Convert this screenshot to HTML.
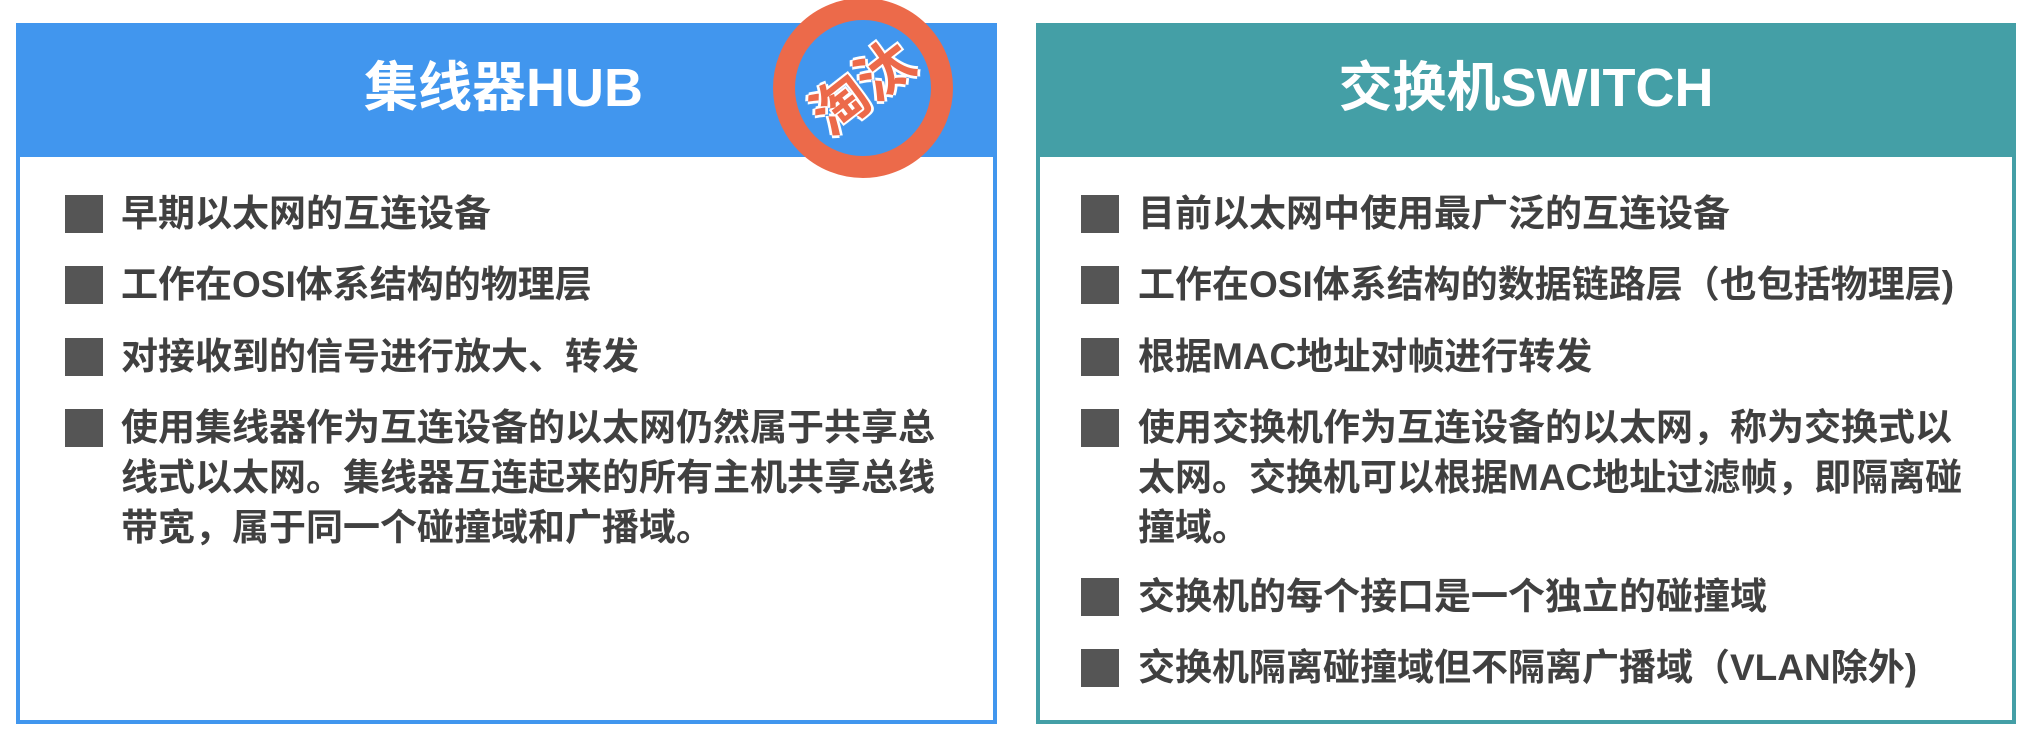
<!DOCTYPE html>
<html><head><meta charset="utf-8"><style>
*{margin:0;padding:0;box-sizing:border-box}
body{width:2038px;height:748px;background:#fff;position:relative;overflow:hidden;font-family:"Liberation Sans","Noto Sans CJK SC",sans-serif;font-weight:bold}
.panel{position:absolute;top:23px;height:701px;border:4px solid #4196ee;background:#fff}
.hdr{position:absolute;left:-4px;right:-4px;top:-4px;height:134px;color:#fff;font-size:54px;text-align:center;line-height:130px}
.item{position:absolute;color:#404040;font-size:37px;line-height:50px;white-space:nowrap}
.sq{position:absolute;width:38px;height:38px;background:#555}
</style></head><body>
<div class="panel" style="left:16px;width:981px;border-color:#4196ee">
  <div class="hdr" style="background:#4196ee;padding-right:6px">集线器HUB</div>
</div>
<div class="panel" style="left:1036px;width:980px;border-color:#449fa6">
  <div class="hdr" style="background:#449fa6">交换机SWITCH</div>
</div>
<div style="position:absolute;left:773px;top:-2px;width:180px;height:180px;border-radius:50%;border:22px solid #ec6a4a;background:#4196ee"></div>
<div style="position:absolute;left:773px;top:60px;width:180px;text-align:center;font-size:56px;line-height:56px;color:#ec6a4a;transform:rotate(-38deg);text-shadow:0 0 3px #fff,2px 2px 0 #fff,-2px -2px 0 #fff,2px -2px 0 #fff,-2px 2px 0 #fff">淘汰</div>

<div class="sq" style="left:65px;top:195px"></div><div class="item" style="left:121px;top:189px">早期以太网的互连设备</div>
<div class="sq" style="left:65px;top:266px"></div><div class="item" style="left:121px;top:260px">工作在OSI体系结构的物理层</div>
<div class="sq" style="left:65px;top:338px"></div><div class="item" style="left:121px;top:332px">对接收到的信号进行放大、转发</div>
<div class="sq" style="left:65px;top:409px"></div><div class="item" style="left:121px;top:403px">使用集线器作为互连设备的以太网仍然属于共享总<br>线式以太网。集线器互连起来的所有主机共享总线<br>带宽，属于同一个碰撞域和广播域。</div>

<div class="sq" style="left:1081px;top:195px"></div><div class="item" style="left:1138px;top:189px">目前以太网中使用最广泛的互连设备</div>
<div class="sq" style="left:1081px;top:266px"></div><div class="item" style="left:1138px;top:260px">工作在OSI体系结构的数据链路层（也包括物理层)</div>
<div class="sq" style="left:1081px;top:338px"></div><div class="item" style="left:1138px;top:332px">根据MAC地址对帧进行转发</div>
<div class="sq" style="left:1081px;top:409px"></div><div class="item" style="left:1138px;top:403px">使用交换机作为互连设备的以太网，称为交换式以<br>太网。交换机可以根据MAC地址过滤帧，即隔离碰<br>撞域。</div>
<div class="sq" style="left:1081px;top:578px"></div><div class="item" style="left:1138px;top:572px">交换机的每个接口是一个独立的碰撞域</div>
<div class="sq" style="left:1081px;top:649px"></div><div class="item" style="left:1138px;top:643px">交换机隔离碰撞域但不隔离广播域（VLAN除外)</div>
</body></html>
